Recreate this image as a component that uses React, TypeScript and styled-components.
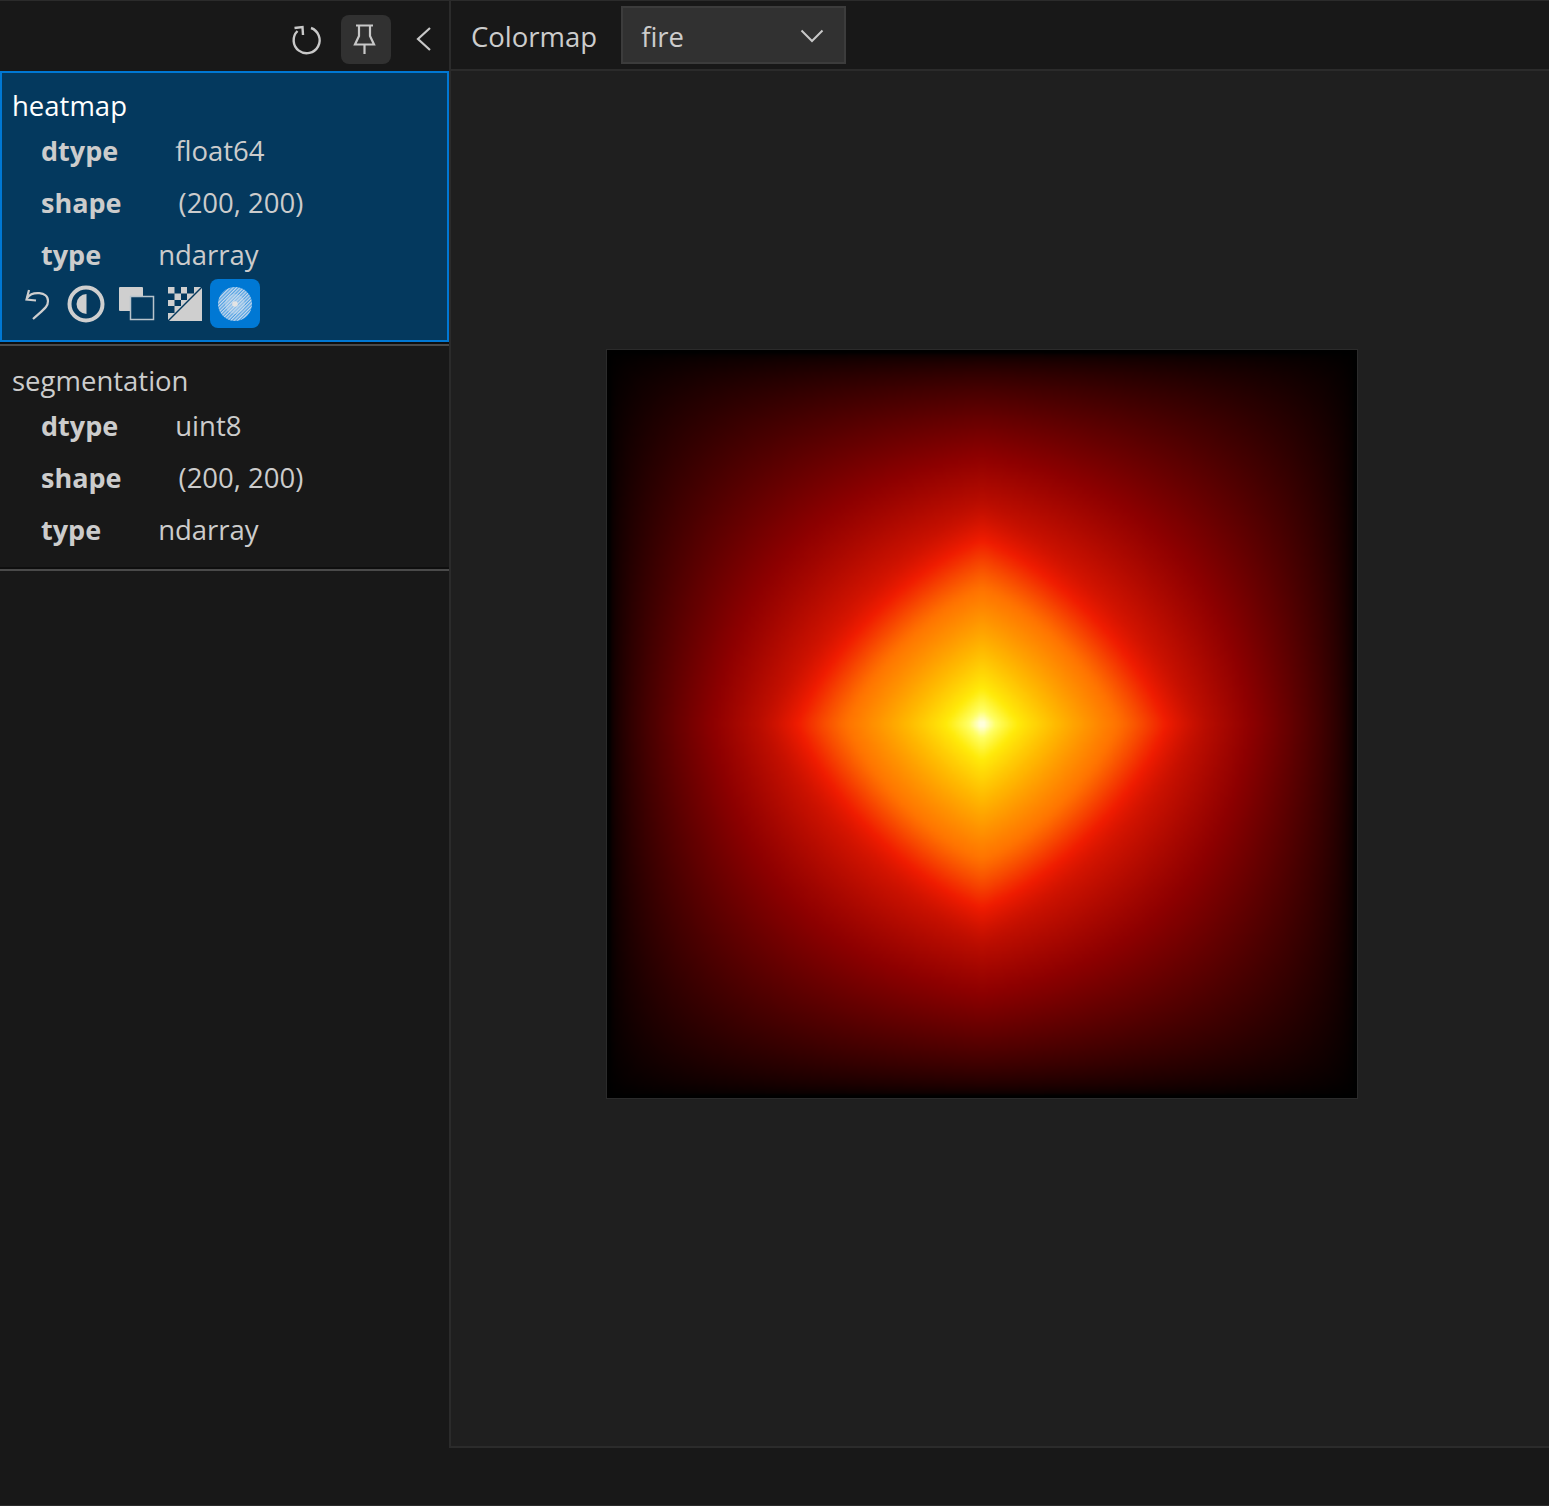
import React, { useEffect, useRef } from 'react';
import styled, { createGlobalStyle } from 'styled-components';

const GlobalStyle = createGlobalStyle`
  html, body {
    margin: 0;
    padding: 0;
    background: #181818;
  }
  * {
    box-sizing: border-box;
  }
`;

type Attr = { label: string; value: string };

const datasets: { name: string; attrs: Attr[]; active?: boolean }[] = [
  {
    name: 'heatmap',
    active: true,
    attrs: [
      { label: 'dtype', value: 'float64' },
      { label: 'shape', value: '(200, 200)' },
      { label: 'type', value: 'ndarray' },
    ],
  },
  {
    name: 'segmentation',
    attrs: [
      { label: 'dtype', value: 'uint8' },
      { label: 'shape', value: '(200, 200)' },
      { label: 'type', value: 'ndarray' },
    ],
  },
];

// stops of the fire colormap
const fire: [number, number, number, number][] = [
  [0, 0, 0, 0],
  [0.25, 140, 0, 0],
  [0.45, 240, 28, 0],
  [0.6, 255, 115, 0],
  [0.75, 255, 180, 0],
  [0.88, 255, 235, 10],
  [0.95, 255, 255, 100],
  [1, 255, 255, 255],
];

const colorAt = (t: number): [number, number, number] => {
  for (let i = 1; i < fire.length; i++) {
    if (t <= fire[i][0]) {
      const a = fire[i - 1];
      const b = fire[i];
      const k = (t - a[0]) / (b[0] - a[0]);
      return [a[1] + (b[1] - a[1]) * k, a[2] + (b[2] - a[2]) * k, a[3] + (b[3] - a[3]) * k];
    }
  }
  return [255, 255, 255];
};

const smoothstep = (a: number, b: number, v: number): number => {
  const k = Math.max(0, Math.min(1, (v - a) / (b - a)));
  return k * k * (3 - 2 * k);
};

const Heatmap = (): JSX.Element => {
  const ref = useRef<HTMLCanvasElement>(null);

  useEffect(() => {
    const ctx = ref.current?.getContext('2d');
    if (!ctx) return;
    const size = 200;
    const img = ctx.createImageData(size, size);
    for (let j = 0; j < size; j++) {
      for (let i = 0; i < size; i++) {
        const x = (i - 99.5) / 99.5;
        const y = (j - 99.5) / 99.5;
        const win = Math.pow(Math.cos((x * Math.PI) / 2) * Math.cos((y * Math.PI) / 2), 0.6);
        const d = Math.pow(Math.pow(Math.abs(x), 1.15) + Math.pow(Math.abs(y), 1.15), 1 / 1.15);
        const inner = 0.27 + 0.65 * Math.exp(-d / 0.5) + 0.08 * (1 - smoothstep(0.36, 0.62, d));
        const [r, g, b] = colorAt(Math.max(0, Math.min(1, win * inner)));
        const p = (j * size + i) * 4;
        img.data[p] = r;
        img.data[p + 1] = g;
        img.data[p + 2] = b;
        img.data[p + 3] = 255;
      }
    }
    ctx.putImageData(img, 0, 0);
  }, []);

  return <HeatCanvas ref={ref} width={200} height={200} />;
};

const App = (): JSX.Element => {
  return (
    <Page>
      <GlobalStyle />
      <Sidebar>
        <SideToolbar>
          <PlainIcon>
            <svg width="34" height="34" viewBox="0 0 34 34" fill="none" stroke="#c8c8c8" strokeWidth="2.4">
              <path d="M21 6 A13 13 0 1 1 7.500 9" />
              <path d="M4.500 6 L12.500 5 L13 13" />
            </svg>
          </PlainIcon>
          <PinButton>
            <svg width="30" height="34" viewBox="0 0 30 34" fill="none" stroke="#c8c8c8" strokeWidth="2.2">
              <path d="M5 3.500 H22 M8 3.500 V14 L4 22.500 H23 L19 14 V3.500 M13.500 22.500 V32" />
            </svg>
          </PinButton>
          <ChevronBox>
            <svg width="16" height="26" viewBox="0 0 16 26" fill="none" stroke="#c8c8c8" strokeWidth="2.2">
              <path d="M14 2 L2 13 L14 24" />
            </svg>
          </ChevronBox>
        </SideToolbar>
        {datasets.map((d) => (
          <CardWrap key={d.name}>
            <Card $active={d.active}>
              <CardName $active={d.active}>{d.name}</CardName>
              {d.attrs.map((a) => (
                <AttrRow key={a.label}>
                  <AttrLabel>{a.label}</AttrLabel>
                  <span>{a.value}</span>
                </AttrRow>
              ))}
              {d.active && (
                <IconRow>
                  <IconSlot>
                    <svg width="30" height="34" viewBox="0 0 30 34" fill="none" stroke="#cfcfcf" strokeWidth="2.2">
                      <path d="M7 3 L4.500 12.500 L14 13.500" />
                      <path d="M5 11 C10 4, 26 4, 26 14 C26 20, 22 22, 11 32" />
                    </svg>
                  </IconSlot>
                  <IconSlot>
                    <svg width="40" height="40" viewBox="0 0 40 40">
                      <circle cx="20" cy="20" r="16.500" fill="none" stroke="#cfcfcf" strokeWidth="4" />
                      <path d="M20.500 10 A10 10 0 0 0 20.500 30 Z" fill="#cfcfcf" />
                    </svg>
                  </IconSlot>
                  <IconSlot>
                    <svg width="38" height="38" viewBox="0 0 38 38">
                      <rect x="2" y="2" width="24" height="24" rx="1" fill="#cfcfcf" />
                      <rect x="13.500" y="11.500" width="23" height="23" fill="#04395e" stroke="#b8c4cc" strokeWidth="1.500" />
                    </svg>
                  </IconSlot>
                  <IconSlot>
                    <svg width="36" height="36" viewBox="0 0 36 36">
                      <path d="M1 1 H35 V35 H1 Z" fill="#cfcfcf" />
                      <path
                        d="M7.500 1 H14 V7.500 H7.500 Z M20 1 H27 V7.500 H20 Z M1 7.500 H7.500 V14 H1 Z M14 7.500 H20 V14 H14 Z M7.500 14 H14 V20 H7.500 Z M1 20 H7.500 V27 H1 Z"
                        fill="#04395e"
                      />
                      <path d="M1 35 L35 1" stroke="#04395e" strokeWidth="1.500" />
                    </svg>
                  </IconSlot>
                  <ActiveSlot>
                    <svg width="36" height="36" viewBox="0 0 36 36">
                      <defs>
                        <pattern id="hatch" width="2.400" height="2.400" patternUnits="userSpaceOnUse" patternTransform="rotate(45)">
                          <rect width="2.400" height="2.400" fill="#4f9fe2" />
                          <rect width="1.200" height="2.400" fill="#c8dcee" />
                        </pattern>
                      </defs>
                      <circle cx="18" cy="18" r="17" fill="url(#hatch)" />
                      <circle cx="18" cy="18" r="10" fill="#cfe0f0" opacity="0.4" />
                      <circle cx="18" cy="18" r="2.800" fill="#e4e4e4" />
                    </svg>
                  </ActiveSlot>
                </IconRow>
              )}
            </Card>
          </CardWrap>
        ))}
      </Sidebar>
      <Main>
        <MainToolbar>
          <ToolLabel>Colormap</ToolLabel>
          <Dropdown>
            <DropdownValue>fire</DropdownValue>
            <svg width="24" height="14" viewBox="0 0 24 14" fill="none" stroke="#c8c8c8" strokeWidth="2">
              <path d="M1.500 1.500 L12 12 L22.500 1.500" />
            </svg>
          </Dropdown>
        </MainToolbar>
        <Viewer>
          <Heatmap />
        </Viewer>
      </Main>
    </Page>
  );
};

const Page = styled.div`
  width: 1549px;
  height: 1506px;
  display: flex;
  align-items: flex-start;
  background: #181818;
  border-top: 1px solid #2b2b2b;
  border-bottom: 1px solid #2b2b2b;
  color: #cccccc;
  font-family: 'Open Sans', 'Noto Sans', sans-serif;
  font-size: 27.5px;
  overflow: hidden;
`;

const Sidebar = styled.aside`
  width: 449px;
  flex: none;
  display: flex;
  flex-direction: column;
`;

const SideToolbar = styled.div`
  height: 70px;
  display: flex;
  align-items: center;
  justify-content: flex-end;
  padding: 6px 9px 0 0;
`;

const PlainIcon = styled.div`
  width: 34px;
  height: 34px;
  margin-right: 17px;
  display: flex;
`;

const PinButton = styled.div`
  width: 50px;
  height: 49px;
  border-radius: 8px;
  background: #313131;
  display: flex;
  align-items: center;
  justify-content: center;
  margin-right: 25px;
`;

const ChevronBox = styled.div`
  width: 16px;
  height: 26px;
  margin-right: 8px;
  display: flex;
`;

const CardWrap = styled.div`
  padding-bottom: 2px;
  background: #0e0e0e;
  border-bottom: 2px solid #4a4a4a;
`;

const Card = styled.div<{ $active?: boolean }>`
  border: 2px solid ${({ $active }) => ($active ? '#0078d4' : 'transparent')};
  background: ${({ $active }) => ($active ? '#04395e' : '#181818')};
  padding: 14px 10px ${({ $active }) => ($active ? '12px' : '9px')};
`;

const CardName = styled.div<{ $active?: boolean }>`
  height: 38px;
  line-height: 38px;
  color: ${({ $active }) => ($active ? '#ffffff' : '#cccccc')};
`;

const AttrRow = styled.div`
  height: 52px;
  display: flex;
  align-items: center;
  gap: 57px;
  padding: 0 0 2px 29px;
`;

const AttrLabel = styled.span`
  font-size: 27px;
  font-weight: 700;
`;

const IconRow = styled.div`
  height: 49px;
  margin-top: -2px;
  display: flex;
  align-items: center;
`;

const IconSlot = styled.div`
  width: 49.5px;
  height: 49px;
  display: flex;
  align-items: center;
  justify-content: center;
`;

const ActiveSlot = styled(IconSlot)`
  background: #0078d4;
  border-radius: 8px;
`;

const Main = styled.main`
  flex: 1;
  height: 1447px;
  border-left: 2px solid #2b2b2b;
  display: flex;
  flex-direction: column;
`;

const MainToolbar = styled.div`
  height: 70px;
  flex: none;
  display: flex;
  align-items: flex-start;
  gap: 24px;
  padding: 5px 0 0 20px;
  border-bottom: 2px solid #2b2b2b;
`;

const ToolLabel = styled.span`
  height: 58px;
  line-height: 62px;
`;

const Dropdown = styled.div`
  width: 225px;
  height: 58px;
  display: flex;
  align-items: center;
  justify-content: space-between;
  padding: 0 20px 0 18px;
  background: #313131;
  border: 2px solid #3c3c3c;

  svg {
    margin-top: 2px;
  }
`;

const DropdownValue = styled.span`
  padding-top: 2px;
`;

const Viewer = styled.div`
  flex: 1;
  background: #1f1f1f;
  border-bottom: 2px solid #2b2b2b;
  padding: 278px 0 0 155px;
`;

const HeatCanvas = styled.canvas`
  display: block;
  width: 752px;
  height: 750px;
  border: 1px solid #2b2b2b;
`;

export default App;
